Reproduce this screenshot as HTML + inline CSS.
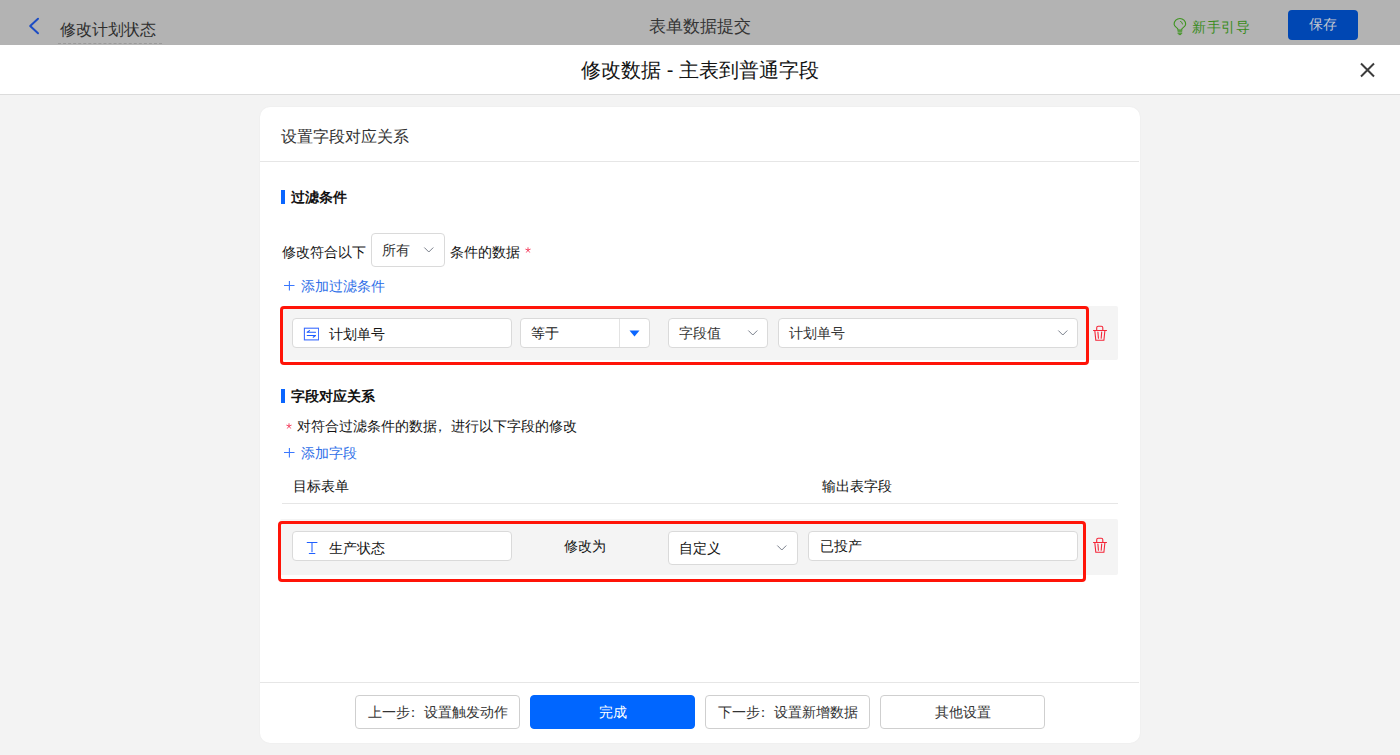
<!DOCTYPE html>
<html><head><meta charset="utf-8">
<style>
*{box-sizing:border-box;margin:0;padding:0}
html,body{width:1400px;height:755px;overflow:hidden}
body{position:relative;background:#f3f3f3;font-family:"Liberation Sans",sans-serif;color:#141414;font-size:14px}
.a{position:absolute;white-space:nowrap}
.top{position:absolute;left:0;top:0;width:1400px;height:45px;background:#b3b3b3}
.mh{position:absolute;left:0;top:45px;width:1400px;height:50px;background:#fff;border-bottom:1px solid #dcdcdc}
.card{position:absolute;left:260px;top:107px;width:880px;height:636px;background:#fff;border-radius:10px;box-shadow:0 0 2px rgba(0,0,0,.05)}
.t{line-height:20px}
.inp{position:absolute;background:#fff;border:1px solid #dadada;border-radius:4px}
.row{position:absolute;background:#f4f4f4;border-radius:2px}
.red{position:absolute;border:3px solid #ff1408;border-radius:4px}
.btn{position:absolute;top:695px;height:34px;width:165px;border:1px solid #cfcfcf;border-radius:4px;background:#fff;text-align:center;line-height:32px;font-size:14px;color:#333}
.bar{position:absolute;width:4px;height:14px;background:#0a66ff}
.blue{color:#2f6fe8}
</style></head><body>
<!-- top dimmed bar -->
<div class="top"></div>
<svg class="a" style="left:27px;top:16px" width="14" height="20" viewBox="0 0 14 20"><path d="M11 2.8 L3.2 10 L11 17.2" fill="none" stroke="#1c4cc4" stroke-width="2" stroke-linecap="round" stroke-linejoin="round"/></svg>
<div class="a t" style="left:60px;top:20px;font-size:16px;color:#2e2e2e;line-height:20px">修改计划状态</div>
<div class="a" style="left:58px;top:43px;width:104px;border-top:1px dashed #9a9a9a"></div>
<div class="a" style="left:600px;top:17px;width:200px;text-align:center;font-size:17px;line-height:20px;color:#353535">表单数据提交</div>
<svg class="a" style="left:1172px;top:17px" width="16" height="19" viewBox="0 0 16 19"><path d="M5.9 13.1V12.2C5.9 10.9 2.1 9.9 2.1 7.3A5.8 5.8 0 0 1 13.7 7.3C13.7 9.9 9.8 10.9 9.8 12.2V13.1Z" fill="none" stroke="#3f9420" stroke-width="1.1"/><path d="M5.6 14.8h4.6M5.6 16.3h4.6M6.6 17.6h2.6" stroke="#3f9420" stroke-width="1"/><path d="M8.2 4.3A3.3 3.3 0 0 1 10.5 7.4" fill="none" stroke="#3f9420" stroke-width="1"/></svg>
<div class="a" style="left:1192px;top:17px;font-size:14px;line-height:20px;color:#3a8c1c;letter-spacing:0.5px">新手引导</div>
<div class="a" style="left:1288px;top:10px;width:70px;height:30px;background:#0047b3;border-radius:4px;color:#c2c6cf;text-align:center;line-height:29px;font-size:14px">保存</div>

<!-- modal header -->
<div class="mh"></div>
<div class="a" style="left:500px;top:57px;width:400px;text-align:center;font-size:20px;line-height:26px;color:#141414">修改数据 - 主表到普通字段</div>
<svg class="a" style="left:1359px;top:62px" width="17" height="16" viewBox="0 0 17 16"><path d="M2 1.5L15 14.5M15 1.5L2 14.5" stroke="#3c3c3c" stroke-width="2"/></svg>

<!-- card -->
<div class="card"></div>
<div class="a" style="left:281px;top:127px;font-size:16px;line-height:20px;color:#333">设置字段对应关系</div>
<div class="a" style="left:260px;top:161px;width:879px;height:1px;background:#e6e6e6"></div>

<div class="bar" style="left:281px;top:190px"></div>
<div class="a" style="left:291px;top:187px;font-size:14px;font-weight:bold;line-height:20px;color:#111">过滤条件</div>

<div class="a" style="left:282px;top:242px;font-size:14px;line-height:20px;color:#141414">修改符合以下</div>
<div class="inp" style="left:371px;top:233px;width:74px;height:34px"></div>
<div class="a" style="left:382px;top:240px;font-size:14px;line-height:20px;color:#333">所有</div>
<svg class="a" style="left:423px;top:246px" width="12" height="8" viewBox="0 0 12 8"><path d="M1.3 1.5L5.8 6L10.3 1.5" fill="none" stroke="#7a808c" stroke-width="1"/></svg>
<div class="a" style="left:450px;top:242px;font-size:14px;line-height:20px;color:#141414">条件的数据</div>
<svg class="a" style="left:525px;top:247px" width="6" height="6" viewBox="0 0 6 6"><path d="M3 0.3v2.7M3 3L0.4 2.1M3 3L5.6 2.1M3 3L1.3 5.5M3 3L4.7 5.5" stroke="#f43a5a" stroke-width="0.9"/></svg>
<svg class="a" style="left:283px;top:280px" width="12" height="11" viewBox="0 0 12 11"><path d="M1 5.5h10.5M6.4 1v9.5" stroke="#3a78ff" stroke-width="1.1"/></svg>
<div class="a blue" style="left:301px;top:276px;font-size:14px;line-height:20px">添加过滤条件</div>

<!-- filter row -->
<div class="row" style="left:280px;top:306px;width:838px;height:54px"></div>
<div class="inp" style="left:292px;top:318px;width:220px;height:30px"></div>
<svg class="a" style="left:303px;top:327px" width="16" height="14" viewBox="0 0 16 14"><rect x="1.4" y="1.2" width="14.2" height="11.7" fill="none" stroke="#3b6cff" stroke-width="1.1"/><path d="M4.2 5.3h8.3M4.2 5.3l2.3-1.7M12.5 8.5H4.2M12.5 8.5l-2.3 1.7" fill="none" stroke="#1f5cff" stroke-width="1.1" stroke-linecap="round"/></svg>
<div class="a" style="left:329px;top:324px;font-size:14px;line-height:20px;color:#141414">计划单号</div>
<div class="inp" style="left:520px;top:318px;width:130px;height:30px"></div>
<div class="a" style="left:619px;top:319px;width:1px;height:28px;background:#e3e3e3"></div>
<div class="a" style="left:531px;top:323px;font-size:14px;line-height:20px;color:#141414">等于</div>
<svg class="a" style="left:629px;top:330px" width="11" height="7" viewBox="0 0 11 7"><path d="M0.5 0.5h10L5.5 6.5z" fill="#0a66ff"/></svg>
<div class="inp" style="left:668px;top:318px;width:100px;height:30px"></div>
<div class="a" style="left:679px;top:323px;font-size:14px;line-height:20px;color:#333">字段值</div>
<svg class="a" style="left:747px;top:329px" width="12" height="8" viewBox="0 0 12 8"><path d="M1.3 1.5L5.8 6L10.3 1.5" fill="none" stroke="#7a808c" stroke-width="1"/></svg>
<div class="inp" style="left:778px;top:318px;width:300px;height:30px"></div>
<div class="a" style="left:789px;top:323px;font-size:14px;line-height:20px;color:#333">计划单号</div>
<svg class="a" style="left:1057px;top:329px" width="12" height="8" viewBox="0 0 12 8"><path d="M1.3 1.5L5.8 6L10.3 1.5" fill="none" stroke="#7a808c" stroke-width="1"/></svg>
<svg class="a" style="left:1092px;top:325px" width="16" height="17" viewBox="0 0 16 17"><path d="M1.5 5.5h13M4.7 5.5V2.7a1.5 1.5 0 0 1 1.5-1.5h3.1a1.5 1.5 0 0 1 1.5 1.5V5.5M2.8 5.5l1 9.8h8.1l1-9.8M5.9 7l.5 6.3M9.7 7l-.5 6.3" fill="none" stroke="#f42638" stroke-width="1.1" stroke-linecap="round"/></svg>
<div class="red" style="left:280px;top:306px;width:809px;height:59px"></div>

<!-- mapping section -->
<div class="bar" style="left:281px;top:389px"></div>
<div class="a" style="left:291px;top:386px;font-size:14px;font-weight:bold;line-height:20px;color:#111">字段对应关系</div>
<svg class="a" style="left:286px;top:423px" width="6" height="6" viewBox="0 0 6 6"><path d="M3 0.3v2.7M3 3L0.4 2.1M3 3L5.6 2.1M3 3L1.3 5.5M3 3L4.7 5.5" stroke="#f43a5a" stroke-width="0.9"/></svg>
<div class="a" style="left:297px;top:416px;font-size:14px;line-height:20px;color:#141414">对符合过滤条件的数据<span style="position:relative;left:-4px">，</span>进行以下字段的修改</div>
<svg class="a" style="left:283px;top:447px" width="12" height="11" viewBox="0 0 12 11"><path d="M1 5.5h10.5M6.4 1v9.5" stroke="#3a78ff" stroke-width="1.1"/></svg>
<div class="a blue" style="left:301px;top:443px;font-size:14px;line-height:20px">添加字段</div>
<div class="a" style="left:293px;top:476px;font-size:14px;line-height:20px;color:#141414">目标表单</div>
<div class="a" style="left:822px;top:476px;font-size:14px;line-height:20px;color:#141414">输出表字段</div>
<div class="a" style="left:282px;top:503px;width:836px;height:1px;background:#e6e6e6"></div>

<!-- mapping row -->
<div class="row" style="left:280px;top:519px;width:838px;height:56px"></div>
<div class="inp" style="left:292px;top:531px;width:220px;height:30px"></div>
<svg class="a" style="left:306px;top:541px" width="12" height="14" viewBox="0 0 12 14"><path d="M1.2 1.5h9.8M6 1.5v9.3M3.3 12.5h5.6" fill="none" stroke="#1f5fff" stroke-width="1.05" stroke-linecap="round"/></svg>
<div class="a" style="left:329px;top:538px;font-size:14px;line-height:20px;color:#141414">生产状态</div>
<div class="a" style="left:564px;top:536px;font-size:14px;line-height:20px;color:#141414">修改为</div>
<div class="inp" style="left:668px;top:531px;width:130px;height:34px"></div>
<div class="a" style="left:679px;top:538px;font-size:14px;line-height:20px;color:#141414">自定义</div>
<svg class="a" style="left:776px;top:544px" width="12" height="8" viewBox="0 0 12 8"><path d="M1.3 1.5L5.8 6L10.3 1.5" fill="none" stroke="#7a808c" stroke-width="1"/></svg>
<div class="inp" style="left:808px;top:531px;width:270px;height:30px"></div>
<div class="a" style="left:820px;top:536px;font-size:14px;line-height:20px;color:#141414">已投产</div>
<svg class="a" style="left:1092px;top:537px" width="16" height="17" viewBox="0 0 16 17"><path d="M1.5 5.5h13M4.7 5.5V2.7a1.5 1.5 0 0 1 1.5-1.5h3.1a1.5 1.5 0 0 1 1.5 1.5V5.5M2.8 5.5l1 9.8h8.1l1-9.8M5.9 7l.5 6.3M9.7 7l-.5 6.3" fill="none" stroke="#f42638" stroke-width="1.1" stroke-linecap="round"/></svg>
<div class="red" style="left:278px;top:521px;width:808px;height:61px"></div>

<!-- footer -->
<div class="a" style="left:260px;top:682px;width:879px;height:1px;background:#e6e6e6"></div>
<div class="btn" style="left:355px">上一步<span style="position:relative;left:-4px">：</span>设置触发动作</div>
<div class="btn" style="left:530px;background:#0066ff;border-color:#0066ff;color:#fff">完成</div>
<div class="btn" style="left:705px">下一步<span style="position:relative;left:-4px">：</span>设置新增数据</div>
<div class="btn" style="left:880px">其他设置</div>
</body></html>
